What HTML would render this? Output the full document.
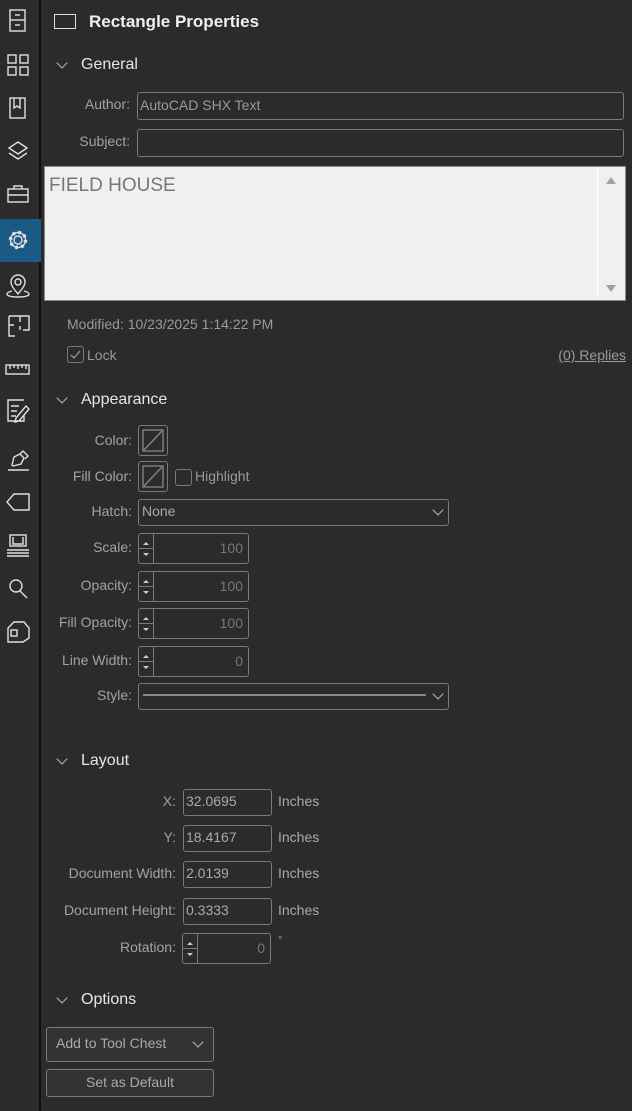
<!DOCTYPE html>
<html><head><meta charset="utf-8"><style>
*{box-sizing:border-box;margin:0;padding:0}
body{width:632px;height:1111px;background:#2b2b2b;font-family:"Liberation Sans",sans-serif;position:relative;overflow:hidden;color:#a8a8a8}
.a{position:absolute}
.side{left:0;top:0;width:41px;height:1111px;background:#2b2b2b;border-right:2px solid #0e0e0e}
.lbl{font-size:14px;color:#a3a3a3;text-align:right;white-space:nowrap}
.h{font-size:16px;color:#e6e6e6;white-space:nowrap}
.chev{width:8px;height:8px;border-right:1.3px solid #bbb;border-bottom:1.3px solid #bbb;transform:rotate(45deg)}
.box{border:1.5px solid #7a7a7a;border-radius:3px}
.txt{font-size:14px;color:#9a9a9a;white-space:nowrap}
.spin{border:1.5px solid #7a7a7a;border-radius:3px;height:31px}
.spin .c{position:absolute;left:0;top:0;width:15px;height:100%;border-right:1.5px solid #7a7a7a}
.spin .c:after{content:"";position:absolute;left:0;top:14px;width:15px;border-top:1.5px solid #7a7a7a}
.spin .v{position:absolute;right:5px;top:6px;font-size:14px;color:#777}
.tu{position:absolute;left:4px;top:5px;border:3px solid transparent;border-bottom:3px solid #ccc}
.td{position:absolute;left:4px;top:19px;border:3px solid transparent;border-top:3px solid #ccc}
svg{position:absolute}
</style></head><body>
<div class="a side"></div>
<div class="a" style="left:0;top:219px;width:41px;height:43px;background:#1c5a86"></div>
<svg width="41" height="660" style="left:0;top:0" fill="none" stroke="#e0e0e0" stroke-width="1.4">
<rect x="10" y="10" width="15" height="21"/><line x1="10" y1="20" x2="25" y2="20"/><line x1="15" y1="15" x2="20" y2="15"/><line x1="15" y1="25" x2="20" y2="25"/>
<rect x="8" y="55" width="8" height="8"/><rect x="20" y="55" width="8" height="8"/><rect x="8" y="67" width="8" height="8"/><rect x="20" y="67" width="8" height="8"/>
<rect x="10" y="98" width="15" height="20"/><path d="M14 98v10l3-2 3 2V98"/>
<path d="M18 142l-9 6 9 6 9-6z"/><path d="M9 153l9 6 9-6"/>
<rect x="8" y="189" width="20" height="13"/><path d="M14 189v-3h8v3M8 195h20"/>
<circle cx="18" cy="240" r="7.5"/><circle cx="18" cy="240" r="7.5" stroke-width="3.5" stroke-dasharray="2.6 3.3"/><circle cx="18" cy="240" r="4"/>
<circle cx="18" cy="282" r="3"/><path d="M18 294c-4-5-7-8-7-12a7 7 0 0 1 14 0c0 4-3 7-7 12z"/><path d="M12 291c-4 1-5 2-5 3 0 2 5 3 11 3s11-1 11-3c0-1-1-2-5-3"/>
<path d="M9 316h20v14h-6M9 316v20h6M15 336h-6M9 325h5M20 316v6M20 326v4"/>
<rect x="6" y="365" width="23" height="9"/><path d="M10 365v4M14 365v3M18 365v4M22 365v3M26 365v4"/>
<path d="M24 400h-16v21h16v-6M11 406h8M11 411h6M11 416h5M16 418l10-12 3 3-10 12-4 1z"/>
<path d="M8 470h21M12 465l2-8 6-3 4 4-3 6-8 2zM20 454l3-3 5 5-3 3"/>
<path d="M29 494v16H14l-7-8 7-8z"/>
<rect x="10" y="535" width="16" height="11"/><path d="M7 550h22M7 553h22M7 556h22M13 537v7h10v-7"/>
<circle cx="16" cy="586" r="6"/><path d="M20 591l7 7"/>
<path d="M8 628l6-6h10l5 6v10l-6 4H8z"/><rect x="11" y="630" width="6" height="6"/>
</svg>
<div class="a box" style="left:54px;top:14px;width:22px;height:15px;border-radius:0;border-color:#ddd"></div>
<div class="a h" style="left:89px;top:12px;font-weight:bold;font-size:17px;color:#f0f0f0">Rectangle Properties</div>
<div class="a chev" style="left:58px;top:59px"></div><div class="a h" style="left:81px;top:56px">General</div>
<div class="a lbl" style="right:502px;top:96px">Author:</div>
<div class="a box" style="left:137px;top:92px;width:487px;height:28px"></div><div class="a txt" style="left:140px;top:97px">AutoCAD SHX Text</div>
<div class="a lbl" style="right:502px;top:133px">Subject:</div>
<div class="a box" style="left:137px;top:129px;width:487px;height:28px"></div>
<div class="a" style="left:44px;top:166px;width:582px;height:135px;background:#f0f0f0;border:1.5px solid #8a8a8a"></div>
<div class="a" style="left:597px;top:168px;width:27px;height:131px;border-left:1px solid #fff"></div>
<div class="a" style="left:606px;top:177px;border:5px solid transparent;border-bottom:7px solid #a0a0a0;border-top:0"></div>
<div class="a" style="left:606px;top:285px;border:5px solid transparent;border-top:7px solid #a0a0a0;border-bottom:0"></div>
<div class="a" style="left:49px;top:175px;font-size:19px;color:#777">FIELD HOUSE</div>
<div class="a txt" style="left:67px;top:316px">Modified: 10/23/2025 1:14:22 PM</div>
<div class="a box" style="left:67px;top:346px;width:17px;height:17px"></div>
<svg width="16" height="16" style="left:68px;top:347px" fill="none" stroke="#999" stroke-width="1.3"><path d="M3 8l3 3 6-7"/></svg>
<div class="a txt" style="left:87px;top:347px">Lock</div>
<div class="a txt" style="right:6px;top:347px;text-decoration:underline">(0) Replies</div>
<div class="a chev" style="left:58px;top:394px"></div><div class="a h" style="left:81px;top:391px">Appearance</div>
<div class="a lbl" style="right:500px;top:432px">Color:</div>
<div class="a box" style="left:138px;top:425px;width:30px;height:31px"></div>
<svg width="30" height="31" style="left:138px;top:425px" fill="none" stroke="#888" stroke-width="1.3"><rect x="5" y="5" width="20" height="21"/><path d="M6 25L24 6"/></svg>
<div class="a lbl" style="right:500px;top:468px">Fill Color:</div>
<div class="a box" style="left:138px;top:461px;width:30px;height:31px"></div>
<svg width="30" height="31" style="left:138px;top:461px" fill="none" stroke="#888" stroke-width="1.3"><rect x="5" y="5" width="20" height="21"/><path d="M6 25L24 6"/></svg>
<div class="a box" style="left:175px;top:469px;width:17px;height:17px"></div>
<div class="a txt" style="left:195px;top:468px">Highlight</div>
<div class="a lbl" style="right:500px;top:503px">Hatch:</div>
<div class="a box" style="left:138px;top:499px;width:311px;height:27px"></div><div class="a txt" style="left:142px;top:503px;color:#aaa">None</div>
<div class="a chev" style="left:434px;top:506px;width:8px;height:8px"></div>
<div class="a lbl" style="right:500px;top:539px">Scale:</div>
<div class="a spin" style="left:138px;top:533px;width:111px"><div class="c"><div class="tu"></div><div class="td"></div></div><div class="v">100</div></div>
<div class="a lbl" style="right:500px;top:577px">Opacity:</div>
<div class="a spin" style="left:138px;top:571px;width:111px"><div class="c"><div class="tu"></div><div class="td"></div></div><div class="v">100</div></div>
<div class="a lbl" style="right:500px;top:614px">Fill Opacity:</div>
<div class="a spin" style="left:138px;top:608px;width:111px"><div class="c"><div class="tu"></div><div class="td"></div></div><div class="v">100</div></div>
<div class="a lbl" style="right:500px;top:652px">Line Width:</div>
<div class="a spin" style="left:138px;top:646px;width:111px"><div class="c"><div class="tu"></div><div class="td"></div></div><div class="v">0</div></div>
<div class="a lbl" style="right:500px;top:687px">Style:</div>
<div class="a box" style="left:138px;top:683px;width:311px;height:27px"></div>
<div class="a" style="left:143px;top:694px;width:283px;height:2px;background:#888"></div>
<div class="a chev" style="left:434px;top:690px"></div>
<div class="a chev" style="left:58px;top:755px"></div><div class="a h" style="left:81px;top:752px">Layout</div>
<div class="a lbl" style="right:456px;top:793px">X:</div>
<div class="a box" style="left:183px;top:789px;width:89px;height:27px"></div><div class="a txt" style="left:186px;top:793px;color:#aaa">32.0695</div><div class="a txt" style="left:278px;top:793px;color:#aaa">Inches</div>
<div class="a lbl" style="right:456px;top:829px">Y:</div>
<div class="a box" style="left:183px;top:825px;width:89px;height:27px"></div><div class="a txt" style="left:186px;top:829px;color:#aaa">18.4167</div><div class="a txt" style="left:278px;top:829px;color:#aaa">Inches</div>
<div class="a lbl" style="right:456px;top:865px">Document Width:</div>
<div class="a box" style="left:183px;top:861px;width:89px;height:27px"></div><div class="a txt" style="left:186px;top:865px;color:#aaa">2.0139</div><div class="a txt" style="left:278px;top:865px;color:#aaa">Inches</div>
<div class="a lbl" style="right:456px;top:902px">Document Height:</div>
<div class="a box" style="left:183px;top:898px;width:89px;height:27px"></div><div class="a txt" style="left:186px;top:902px;color:#aaa">0.3333</div><div class="a txt" style="left:278px;top:902px;color:#aaa">Inches</div>
<div class="a lbl" style="right:456px;top:939px">Rotation:</div>
<div class="a spin" style="left:182px;top:933px;width:89px"><div class="c"><div class="tu"></div><div class="td"></div></div><div class="v">0</div></div>
<div class="a txt" style="left:278px;top:935px;font-size:11px">°</div>
<div class="a chev" style="left:58px;top:994px"></div><div class="a h" style="left:81px;top:991px">Options</div>
<div class="a box" style="left:46px;top:1027px;width:168px;height:35px;background:#333"></div>
<div class="a txt" style="left:56px;top:1035px;color:#aaa">Add to Tool Chest</div>
<div class="a chev" style="left:194px;top:1038px"></div>
<div class="a box" style="left:46px;top:1069px;width:168px;height:28px;background:#333"></div>
<div class="a txt" style="left:46px;top:1074px;width:168px;text-align:center;color:#aaa">Set as Default</div>
</body></html>
